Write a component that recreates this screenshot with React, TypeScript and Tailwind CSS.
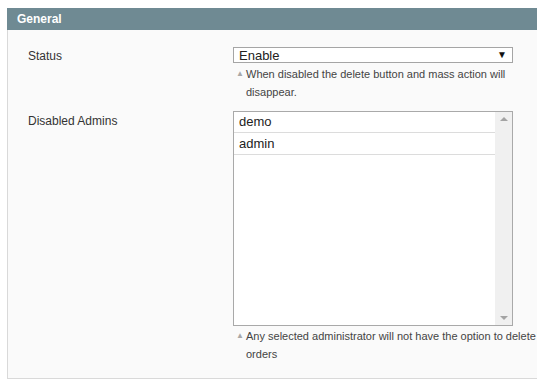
import React from "react";

const font = { fontFamily: '"Liberation Sans", Arial, sans-serif' };

function Help({ children }: { children: React.ReactNode }) {
  return (
    <div className="flex w-[304px] text-[11px] leading-[18px] text-[#444]">
      <span className="w-[13px] shrink-0 pl-[3px] text-[8px] text-[#a8a8a8] leading-[18px]">▲</span>
      <span>{children}</span>
    </div>
  );
}

export default function App() {
  return (
    <div className="w-[537px] h-[389px] bg-white pt-[8px] pl-[7px] overflow-hidden" style={font}>
      <div className="h-[22px] bg-[#6f8a93] text-white font-bold text-[12px] leading-[22px] pl-[10px]">
        General
      </div>
      <div className="h-[349px] border-l border-b border-[#d9d9d9] bg-[#fafafa] pt-[17px]">
        <div className="flex">
          <div className="w-[225px] shrink-0 pl-[20px] pt-[1px] text-[12px] leading-[16px] text-[#333]">Status</div>
          <div className="shrink-0">
            <div className="w-[280px] h-[16px] border border-[#a5a5a5] bg-white flex items-center justify-between pl-[5px] pr-[5px] text-[13px] text-[#222]">
              <span className="leading-[14px] pt-[1px]">Enable</span>
              <span className="text-[10px] leading-[14px] text-[#111]">▼</span>
            </div>
            <div className="mt-[2px]">
              <Help>When disabled the delete button and mass action will disappear.</Help>
            </div>
          </div>
        </div>
        <div className="flex mt-[10px]">
          <div className="w-[225px] shrink-0 pl-[20px] pt-[2px] text-[12px] leading-[16px] text-[#333]">Disabled Admins</div>
          <div className="shrink-0">
            <div className="w-[280px] h-[215px] border border-[#a9a9a9] bg-white flex">
              <div className="flex-1">
                <div className="h-[21px] border-b border-[#dcdcdc] pl-[5px] text-[13px] leading-[20px] text-[#222]">demo</div>
                <div className="h-[22px] border-b border-[#dcdcdc] pl-[5px] text-[13px] leading-[21px] text-[#222]">admin</div>
              </div>
              <div className="w-[17px] bg-[#f0f0f0] flex flex-col justify-between items-center py-[5px]">
                <svg width="8" height="4" viewBox="0 0 8 4"><path d="M0 4 L4 0 L8 4 Z" fill="#a3a3a3" /></svg>
                <svg width="8" height="4" viewBox="0 0 8 4"><path d="M0 0 L4 4 L8 0 Z" fill="#a3a3a3" /></svg>
              </div>
            </div>
            <div className="mt-[1px]">
              <Help>Any selected administrator will not have the option to delete orders</Help>
            </div>
          </div>
        </div>
      </div>
    </div>
  );
}
